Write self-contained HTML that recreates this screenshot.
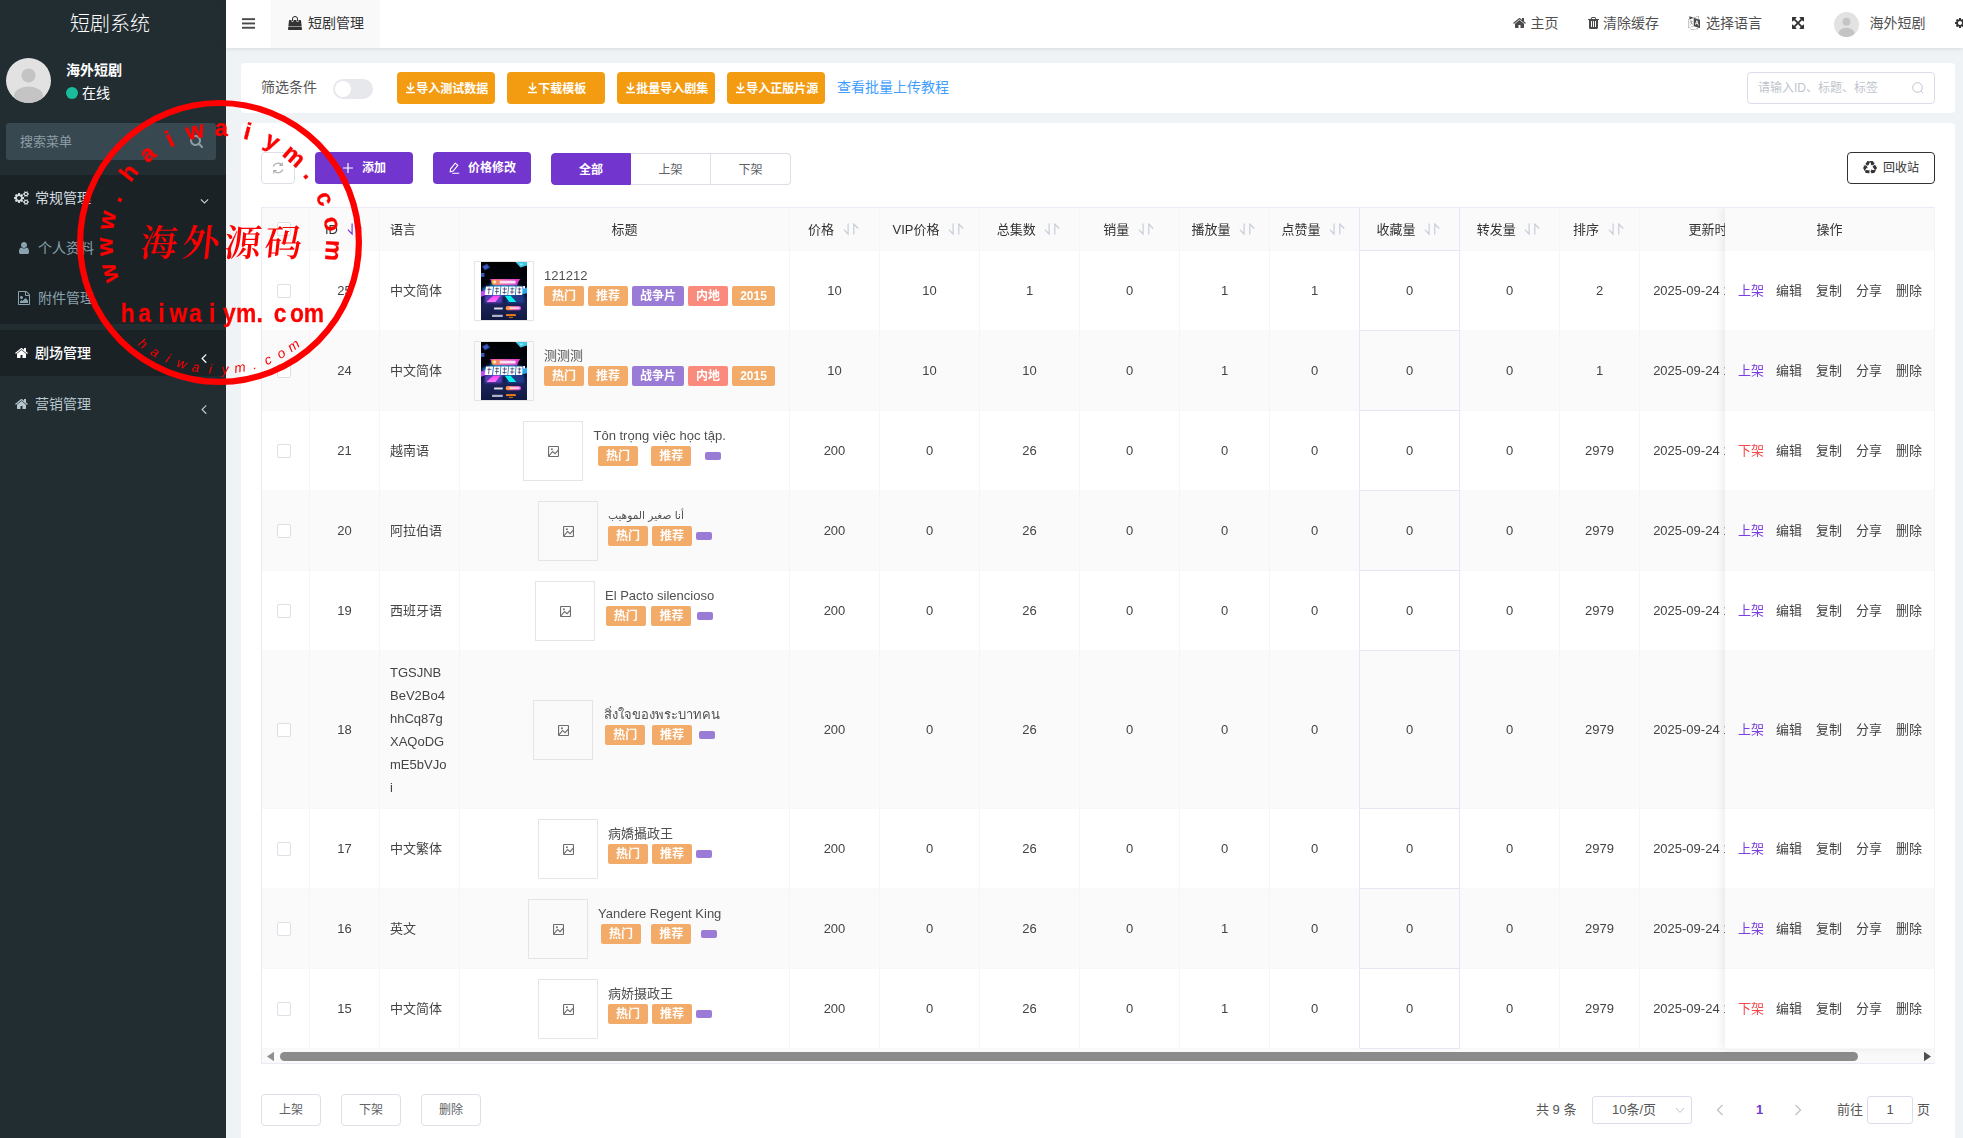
<!DOCTYPE html>
<html lang="zh-CN">
<head>
<meta charset="utf-8">
<title>短剧系统</title>
<style>
*{box-sizing:border-box;margin:0;padding:0}
html,body{width:1963px;height:1138px;overflow:hidden}
body{font-family:"Liberation Sans","Noto Sans CJK SC","DejaVu Sans",sans-serif;font-size:14px;color:#333;background:#eff3f6;position:relative}
svg{display:block}
.abs{position:absolute}
#side{position:absolute;left:0;top:0;width:226px;height:1138px;background:#222d32;color:#b8c7ce}
#logo{position:absolute;left:0;top:0;width:220px;height:46px;line-height:48px;text-align:center;color:#fff;font-size:20px;font-weight:300}
#avatar{position:absolute;left:6px;top:58px;width:45px;height:45px;border-radius:50%;background:#e2e2e2;overflow:hidden}
#uname{position:absolute;left:66px;top:60px;font-size:14px;font-weight:700;color:#fff;line-height:21px}
#ustat{position:absolute;left:66px;top:83px;font-size:14px;color:#fff;line-height:20px;padding-left:16px}
#ustat i{position:absolute;left:0;top:4px;width:12px;height:12px;border-radius:50%;background:#1abc9c}
#ssearch{position:absolute;left:6px;top:123px;width:210px;height:37px;border-radius:3px;background:#374850;color:#8e9da4;font-size:13px;line-height:37px;padding-left:14px}
.mblock{position:absolute;left:0;width:226px;background:#1a2226}
.mi{position:absolute;left:0;width:226px;height:20px;line-height:20px;font-size:14px;white-space:nowrap}
.mi .tx{position:absolute;top:0}
#hdr{position:absolute;left:226px;top:0;width:1737px;height:48px;background:#fff;box-shadow:0 1px 4px rgba(0,21,41,.10)}
#tab{position:absolute;left:45px;top:0;width:109px;height:48px;background:#f9f9f9;line-height:46px;font-size:14px;color:#333}
.nav{position:absolute;top:0;height:46px;line-height:46.5px;font-size:14px;color:#505050;white-space:nowrap}
#c1{position:absolute;left:241px;top:63px;width:1714px;height:50px;background:#fff;border-radius:4px}
#c2{position:absolute;left:241px;top:123px;width:1714px;height:1030px;background:#fff;border-radius:4px}
.obtn{position:absolute;top:9px;width:98px;height:32px;border-radius:4px;background:#f39c12;color:#fff;font-size:12px;font-weight:700;line-height:34px;white-space:nowrap}
.obtn span{position:absolute;top:0}
.pbtn{position:absolute;top:29px;width:98px;height:32px;border-radius:4px;background:#7236cf;color:#fff;font-size:12px;font-weight:700;line-height:33.5px;white-space:nowrap}
.pbtn span{position:absolute;top:0}
.seg{position:absolute;top:30px;width:80px;height:32px;border:1px solid #dcdfe6;border-left:0;color:#606266;font-size:12px;line-height:33px;text-align:center;background:#fff}
.bbtn{position:absolute;top:971px;width:60px;height:32px;border:1px solid #dcdfe6;border-radius:4px;color:#606266;font-size:12px;line-height:30px;text-align:center;background:#fff}
/* table */
#tw{position:absolute;left:261px;top:207px;width:1674px;height:857px;border:1px solid #ebebf5;border-right-color:#f3f3f8;overflow:hidden;background:transparent;will-change:transform;font-size:13px;color:#444}
.row{position:absolute;left:0;width:1672px}
.row.s{background:#fafafa}
.c{position:absolute;top:0;height:100%;border-right:1px solid #f5f5f9;border-bottom:1px solid #f8f8fb;white-space:nowrap}
.c .t{position:absolute;left:0;right:0;top:50%;margin-top:-11.5px;line-height:23px;text-align:center}
.c .tl{position:absolute;left:10px;top:50%;margin-top:-11.5px;line-height:23px}
.hd{position:absolute;left:0;top:0;width:1672px;height:43px;background:#fafafa;color:#333}
.cb{position:absolute;left:15px;top:50%;margin-top:-7px;width:14px;height:14px;border:1px solid #dcdfe6;border-radius:2px;background:#fff}
.imgb{position:absolute;top:50%;margin-top:-30px;width:60px;height:60px;border:1px solid #e5e5e8;background:transparent}
.tt{position:absolute;top:50%;margin-top:-27px;line-height:23px;font-size:13px;color:#505050;white-space:nowrap}
.tag{position:absolute;top:50%;margin-top:-5px;height:20px;line-height:20px;border-radius:2px;color:#fff;font-size:12px;font-weight:700;text-align:center}
.to{background:#f3ab69}.tp{background:#9a7bd6}.tr{background:#fa8b7c}
.pt{position:absolute;top:50%;margin-top:1px;width:16px;height:8px;border-radius:2px;background:#9a7bd6}
#fx{position:absolute;left:1463px;top:0;width:209px;height:841px;background:#fff;box-shadow:-3px 0 8px rgba(0,0,0,.07)}
.frow{position:absolute;left:0;width:209px;border-bottom:1px solid #f8f8fb}
.frow.s{background:#fafafa}
.frow a{position:absolute;top:50%;margin-top:-11.5px;line-height:23px;font-size:13px;color:#444}

.c.k{border-color:#e6e6f4}
.c.kp{border-right-color:#e6e6f4}

</style>
</head>
<body>
<div id="side">
<div id="logo">短剧系统</div>
<div id="avatar"><svg width="45" height="45" viewBox="0 0 45 45"><circle cx="22.5" cy="17.5" r="7" fill="#c4c4c4"/><ellipse cx="22.5" cy="38" rx="14.5" ry="9.5" fill="#c4c4c4"/></svg></div>
<div id="uname">海外短剧</div>
<div id="ustat"><i></i>在线</div>
<div id="ssearch">搜索菜单</div>
<svg style="position:absolute;left:190px;top:134px" width="13.00" height="14.00" viewBox="0 -1536 1664 1792"><path fill="#8e9da4" transform="scale(1,-1)" d="M1152 704C1152 457 951 256 704 256C457 256 256 457 256 704C256 951 457 1152 704 1152C951 1152 1152 951 1152 704ZM1664 -128C1664 -94 1650 -61 1627 -38L1284 305C1365 422 1408 562 1408 704C1408 1093 1093 1408 704 1408C315 1408 0 1093 0 704C0 315 315 0 704 0C846 0 986 43 1103 124L1446 -218C1469 -242 1502 -256 1536 -256C1606 -256 1664 -198 1664 -128Z"/></svg><div class="mblock" style="top:175px;height:149px"></div>
<div class="mblock" style="top:330px;height:46px"></div>
<div class="mi" style="top:188px;color:#d6dde0"><span class="tx" style="left:35px">常规管理</span></div>
<svg style="position:absolute;left:13.5px;top:191px" width="15.00" height="14.00" viewBox="0 -1536 1920 1792"><path fill="#d6dde0" transform="scale(1,-1)" d="M896 640C896 499 781 384 640 384C499 384 384 499 384 640C384 781 499 896 640 896C781 896 896 781 896 640ZM1664 128C1664 58 1607 0 1536 0C1466 0 1408 57 1408 128C1408 198 1466 256 1536 256C1606 256 1664 198 1664 128ZM1664 1152C1664 1082 1607 1024 1536 1024C1466 1024 1408 1081 1408 1152C1408 1222 1466 1280 1536 1280C1606 1280 1664 1222 1664 1152ZM1280 731C1280 745 1270 758 1256 761L1104 784C1095 812 1083 839 1070 866C1098 905 1128 941 1157 980C1161 986 1164 992 1164 999C1164 1027 1046 1135 1020 1159C1014 1164 1007 1167 999 1167C992 1167 985 1165 979 1160L861 1071C837 1083 812 1094 786 1102L763 1255C761 1269 747 1280 733 1280H547C533 1280 521 1270 517 1256C504 1207 499 1152 494 1102C467 1093 442 1083 417 1070L302 1160C296 1164 289 1167 281 1167C252 1167 140 1046 120 1019C115 1013 113 1006 113 999C113 992 116 985 120 979C152 941 182 904 210 864C197 839 186 814 178 788L23 764C10 762 0 747 0 734V549C0 535 10 522 24 520L176 496C185 468 197 441 211 414C182 375 152 338 123 300C119 294 116 288 116 281C116 252 234 145 260 121C266 116 273 113 281 113C288 113 296 115 301 120L419 209C443 197 468 186 494 178L517 25C519 11 533 0 547 0H733C747 0 759 10 763 24C776 73 781 128 786 179C813 187 838 197 863 210L978 120C984 116 991 113 999 113C1028 113 1140 235 1160 262C1165 267 1167 274 1167 281C1167 289 1164 295 1160 301C1128 339 1098 376 1070 416C1083 441 1094 466 1102 492L1257 516C1270 518 1280 533 1280 546ZM1920 198C1920 213 1791 227 1771 229C1763 247 1753 265 1741 281C1750 301 1792 401 1792 419C1792 421 1791 424 1788 426C1776 433 1669 496 1664 496L1658 494C1624 460 1594 421 1566 382C1556 383 1546 384 1536 384C1526 384 1516 383 1506 382C1496 397 1421 496 1408 496C1403 496 1296 432 1284 426C1281 424 1280 421 1280 419C1280 402 1322 301 1331 281C1319 265 1309 247 1301 229C1281 227 1152 213 1152 198V58C1152 43 1281 29 1301 27C1309 8 1319 -9 1331 -25C1322 -45 1280 -146 1280 -163C1280 -165 1281 -168 1284 -170C1296 -177 1403 -241 1408 -241C1421 -241 1496 -141 1506 -126C1516 -127 1526 -128 1536 -128C1546 -128 1556 -127 1566 -126C1576 -141 1651 -241 1664 -241C1669 -241 1776 -177 1788 -170C1791 -168 1792 -166 1792 -163C1792 -145 1750 -45 1741 -25C1753 -9 1763 8 1771 27C1791 29 1920 43 1920 58ZM1920 1222C1920 1237 1791 1251 1771 1253C1763 1271 1753 1289 1741 1305C1750 1325 1792 1425 1792 1443C1792 1445 1791 1448 1788 1450C1776 1457 1669 1520 1664 1520L1658 1518C1624 1484 1594 1445 1566 1406C1556 1407 1546 1408 1536 1408C1526 1408 1516 1407 1506 1406C1496 1421 1421 1520 1408 1520C1403 1520 1296 1456 1284 1450C1281 1448 1280 1445 1280 1443C1280 1426 1322 1325 1331 1305C1319 1289 1309 1271 1301 1253C1281 1251 1152 1237 1152 1222V1082C1152 1067 1281 1053 1301 1051C1309 1032 1319 1015 1331 999C1322 979 1280 878 1280 861C1280 859 1281 856 1284 854C1296 847 1403 783 1408 783C1421 783 1496 883 1506 898C1516 897 1526 896 1536 896C1546 896 1556 897 1566 898C1576 883 1651 783 1664 783C1669 783 1776 847 1788 854C1791 856 1792 858 1792 861C1792 879 1750 979 1741 999C1753 1015 1763 1032 1771 1051C1791 1053 1920 1067 1920 1082Z"/></svg><div class="mi" style="top:237.6px;color:#8aa4af"><span class="tx" style="left:38px">个人资料</span></div>
<svg style="position:absolute;left:19px;top:240.5px" width="10.00" height="14.00" viewBox="0 -1536 1280 1792"><path fill="#8aa4af" transform="scale(1,-1)" d="M1280 137C1280 400 1215 704 953 704C872 625 762 576 640 576C518 576 408 625 327 704C65 704 0 400 0 137C0 -9 96 -128 213 -128H1067C1184 -128 1280 -9 1280 137ZM1024 1024C1024 1236 852 1408 640 1408C428 1408 256 1236 256 1024C256 812 428 640 640 640C852 640 1024 812 1024 1024Z"/></svg><div class="mi" style="top:287.6px;color:#8aa4af"><span class="tx" style="left:38px">附件管理</span></div>
<svg style="position:absolute;left:18px;top:290.5px" width="12.00" height="14.00" viewBox="0 -1536 1536 1792"><path fill="#8aa4af" transform="scale(1,-1)" d="M1468 1156 1156 1468C1119 1505 1045 1536 992 1536H96C43 1536 0 1493 0 1440V-160C0 -213 43 -256 96 -256H1440C1493 -256 1536 -213 1536 -160V992C1536 1045 1505 1119 1468 1156ZM1024 1400C1041 1394 1058 1385 1065 1378L1378 1065C1385 1058 1394 1041 1400 1024H1024ZM1408 -128H128V1408H896V992C896 939 939 896 992 896H1408ZM1280 320 960 640 576 256 448 384 256 192V0H1280ZM448 512C554 512 640 598 640 704C640 810 554 896 448 896C342 896 256 810 256 704C256 598 342 512 448 512Z"/></svg><div class="mi" style="top:342.6px;color:#fff;font-weight:500"><span class="tx" style="left:35px">剧场管理</span></div>
<svg style="position:absolute;left:14.5px;top:345.5px" width="13.00" height="14.00" viewBox="0 -1536 1664 1792"><path fill="#fff" transform="scale(1,-1)" d="M1408 544C1408 546 1408 548 1407 550L832 1024L257 550C257 548 256 546 256 544V64C256 29 285 0 320 0H704V384H960V0H1344C1379 0 1408 29 1408 64ZM1631 613C1642 626 1640 647 1627 658L1408 840V1248C1408 1266 1394 1280 1376 1280H1184C1166 1280 1152 1266 1152 1248V1053L908 1257C866 1292 798 1292 756 1257L37 658C24 647 22 626 33 613L95 539C100 533 108 529 116 528C125 527 133 530 140 535L832 1112L1524 535C1530 530 1537 528 1545 528C1546 528 1547 528 1548 528C1556 529 1564 533 1569 539L1631 613Z"/></svg><div class="mi" style="top:393.6px;color:#b8c7ce"><span class="tx" style="left:35px">营销管理</span></div>
<svg style="position:absolute;left:14.5px;top:396.5px" width="13.00" height="14.00" viewBox="0 -1536 1664 1792"><path fill="#b8c7ce" transform="scale(1,-1)" d="M1408 544C1408 546 1408 548 1407 550L832 1024L257 550C257 548 256 546 256 544V64C256 29 285 0 320 0H704V384H960V0H1344C1379 0 1408 29 1408 64ZM1631 613C1642 626 1640 647 1627 658L1408 840V1248C1408 1266 1394 1280 1376 1280H1184C1166 1280 1152 1266 1152 1248V1053L908 1257C866 1292 798 1292 756 1257L37 658C24 647 22 626 33 613L95 539C100 533 108 529 116 528C125 527 133 530 140 535L832 1112L1524 535C1530 530 1537 528 1545 528C1546 528 1547 528 1548 528C1556 529 1564 533 1569 539L1631 613Z"/></svg><svg style="position:absolute;left:200px;top:194.3px" width="9.00" height="14.00" viewBox="0 -1536 1152 1792"><path fill="#d6dde0" transform="scale(1,-1)" d="M1075 800C1075 808 1071 817 1065 823L1015 873C1009 879 1000 883 992 883C984 883 975 879 969 873L576 480L183 873C177 879 168 883 160 883C151 883 143 879 137 873L87 823C81 817 77 808 77 800C77 792 81 783 87 777L553 311C559 305 568 301 576 301C584 301 593 305 599 311L1065 777C1071 783 1075 792 1075 800Z"/></svg><svg style="position:absolute;left:201px;top:350px" width="5.71" height="16.00" viewBox="0 -1536 640 1792"><path fill="#fff" transform="scale(1,-1)" d="M627 992C627 1001 623 1009 617 1015L567 1065C561 1071 552 1075 544 1075C536 1075 527 1071 521 1065L55 599C49 593 45 584 45 576C45 568 49 559 55 553L521 87C527 81 536 77 544 77C552 77 561 81 567 87L617 137C623 143 627 152 627 160C627 168 623 177 617 183L224 576L617 969C623 975 627 984 627 992Z"/></svg><svg style="position:absolute;left:201px;top:400.5px" width="5.71" height="16.00" viewBox="0 -1536 640 1792"><path fill="#b8c7ce" transform="scale(1,-1)" d="M627 992C627 1001 623 1009 617 1015L567 1065C561 1071 552 1075 544 1075C536 1075 527 1071 521 1065L55 599C49 593 45 584 45 576C45 568 49 559 55 553L521 87C527 81 536 77 544 77C552 77 561 81 567 87L617 137C623 143 627 152 627 160C627 168 623 177 617 183L224 576L617 969C623 975 627 984 627 992Z"/></svg></div>
<div id="hdr">
<svg class="abs" style="left:16px;top:17.5px" width="13" height="11" viewBox="0 0 13 11"><rect x="0" y="0.2" width="13" height="1.9" fill="#4a4a4a"/><rect x="0" y="4.5" width="13" height="1.9" fill="#4a4a4a"/><rect x="0" y="8.8" width="13" height="1.9" fill="#4a4a4a"/></svg>
<div id="tab"><svg style="position:absolute;left:16.5px;top:16px" width="14.00" height="14.00" viewBox="0 -1536 1792 1792"><path fill="#333" transform="scale(1,-1)" d="M1757 128H35L0 -185C-2 -203 4 -221 16 -235C28 -248 46 -256 64 -256H1728C1746 -256 1764 -248 1776 -235C1788 -221 1794 -203 1792 -185ZM1664 967C1660 999 1633 1024 1600 1024H1344V896C1344 825 1287 768 1216 768C1145 768 1088 825 1088 896V1024H704V896C704 825 647 768 576 768C505 768 448 825 448 896V1024H192C159 1024 132 999 128 967L42 192H1750ZM1280 1152C1280 1364 1108 1536 896 1536C684 1536 512 1364 512 1152V896C512 861 541 832 576 832C611 832 640 861 640 896V1152C640 1293 755 1408 896 1408C1037 1408 1152 1293 1152 1152V896C1152 861 1181 832 1216 832C1251 832 1280 861 1280 896Z"/></svg><span style="position:absolute;left:37px;top:0">短剧管理</span></div>
<svg style="position:absolute;left:1287px;top:16px" width="13.00" height="14.00" viewBox="0 -1536 1664 1792"><path fill="#4a4a4a" transform="scale(1,-1)" d="M1408 544C1408 546 1408 548 1407 550L832 1024L257 550C257 548 256 546 256 544V64C256 29 285 0 320 0H704V384H960V0H1344C1379 0 1408 29 1408 64ZM1631 613C1642 626 1640 647 1627 658L1408 840V1248C1408 1266 1394 1280 1376 1280H1184C1166 1280 1152 1266 1152 1248V1053L908 1257C866 1292 798 1292 756 1257L37 658C24 647 22 626 33 613L95 539C100 533 108 529 116 528C125 527 133 530 140 535L832 1112L1524 535C1530 530 1537 528 1545 528C1546 528 1547 528 1548 528C1556 529 1564 533 1569 539L1631 613Z"/></svg><div class="nav" style="left:1304.5px">主页</div>
<svg style="position:absolute;left:1361.5px;top:16px" width="11.00" height="14.00" viewBox="0 -1536 1408 1792"><path fill="#4a4a4a" transform="scale(1,-1)" d="M512 160C512 142 498 128 480 128H416C398 128 384 142 384 160V864C384 882 398 896 416 896H480C498 896 512 882 512 864V160ZM768 160C768 142 754 128 736 128H672C654 128 640 142 640 160V864C640 882 654 896 672 896H736C754 896 768 882 768 864V160ZM1024 160C1024 142 1010 128 992 128H928C910 128 896 142 896 160V864C896 882 910 896 928 896H992C1010 896 1024 882 1024 864V160ZM480 1152 529 1269C532 1273 540 1279 546 1280H863C868 1279 877 1273 880 1269L928 1152ZM1408 1120C1408 1138 1394 1152 1376 1152H1067L997 1319C977 1368 917 1408 864 1408H544C491 1408 431 1368 411 1319L341 1152H32C14 1152 0 1138 0 1120V1056C0 1038 14 1024 32 1024H128V72C128 -38 200 -128 288 -128H1120C1208 -128 1280 -34 1280 76V1024H1376C1394 1024 1408 1038 1408 1056Z"/></svg><div class="nav" style="left:1377px">清除缓存</div>
<svg style="position:absolute;left:1462px;top:16px" width="12.00" height="14.00" viewBox="0 -1536 1536 1792"><path fill="#4a4a4a" transform="scale(1,-1)" d="M654 458C656 466 645 512 639 514C633 516 514 566 497 574C483 581 449 595 433 602C478 672 506 725 510 733C517 748 565 842 566 847C567 853 568 875 567 880C566 885 549 875 525 867C501 859 456 829 438 826C421 822 365 801 336 791C307 781 253 765 231 759C209 753 189 752 177 748C178 731 182 725 182 725C185 720 197 707 210 704C224 700 247 701 257 704C268 706 286 715 288 719C290 723 287 735 291 739C295 742 350 755 370 761C391 768 470 795 480 794C477 782 414 656 393 618C373 580 254 414 229 385C209 362 163 305 147 293C151 291 180 294 185 297C218 318 272 386 290 407C342 468 388 533 424 588C431 585 488 538 503 528C518 518 577 485 590 479C603 474 652 451 654 458ZM449 944C446 957 438 961 428 961C418 960 388 952 373 947C359 943 328 934 315 931C302 928 273 932 269 936C265 940 274 905 286 892C308 870 326 867 335 866C355 866 380 872 395 878C410 884 435 897 445 916C447 920 452 927 449 944ZM1147 815 1071 630 1210 588ZM39 15V1046L733 1279V247ZM1280 332 1243 467 1032 532 987 422 885 453 1101 989 1201 958 1382 301ZM777 1294 1350 1490V1110ZM1088 -29 1131 -102C1100 -119 1071 -138 1038 -153C924 -202 839 -218 714 -218C613 -218 487 -177 397 -132C384 -126 337 -97 328 -97C318 -97 310 -105 310 -116C310 -123 312 -127 318 -132C402 -193 595 -256 701 -256H785C814 -256 847 -250 876 -244C971 -228 1071 -188 1152 -136L1192 -202L1246 -42ZM1536 1050 1389 1097V1515C1389 1528 1380 1536 1369 1536C1360 1536 738 1321 731 1319L173 1517V1133C88 1104 27 1084 24 1083C18 1081 10 1079 4 1072C2 1070 1 1065 0 1062V-16C0 -17 1 -18 1 -19C4 -27 11 -32 19 -32C29 -32 746 210 762 217C762 217 763 217 1536 -29Z"/></svg><div class="nav" style="left:1480px">选择语言</div>
<svg style="position:absolute;left:1565.5px;top:16px" width="12.00" height="14.00" viewBox="0 -1536 1536 1792"><path fill="#333" transform="scale(1,-1)" d="M1283 995 1427 851C1439 839 1455 832 1472 832C1480 832 1489 834 1497 837C1520 847 1536 870 1536 896V1344C1536 1379 1507 1408 1472 1408H1024C998 1408 975 1392 965 1368C955 1345 960 1317 979 1299L1123 1155L768 800L413 1155L557 1299C576 1317 581 1345 571 1368C561 1392 538 1408 512 1408H64C29 1408 0 1379 0 1344V896C0 870 16 847 40 837C47 834 56 832 64 832C81 832 97 839 109 851L253 995L608 640L253 285L109 429C91 448 63 453 40 443C16 433 0 410 0 384V-64C0 -99 29 -128 64 -128H512C538 -128 561 -112 571 -88C581 -65 576 -37 557 -19L413 125L768 480L1123 125L979 -19C960 -37 955 -65 965 -88C975 -112 998 -128 1024 -128H1472C1507 -128 1536 -99 1536 -64V384C1536 410 1520 433 1497 443C1473 453 1445 448 1427 429L1283 285L928 640Z"/></svg><div class="abs" style="left:1608px;top:12px;width:25px;height:25px;border-radius:50%;background:#e2e2e2;overflow:hidden"><svg width="25" height="25" viewBox="0 0 45 45"><circle cx="22.5" cy="17.5" r="7" fill="#c4c4c4"/><ellipse cx="22.5" cy="38" rx="14.5" ry="9.5" fill="#c4c4c4"/></svg></div>
<div class="nav" style="left:1643.5px">海外短剧</div>
<svg style="position:absolute;left:1729px;top:16px" width="15.00" height="14.00" viewBox="0 -1536 1920 1792"><path fill="#333" transform="scale(1,-1)" d="M896 640C896 499 781 384 640 384C499 384 384 499 384 640C384 781 499 896 640 896C781 896 896 781 896 640ZM1664 128C1664 58 1607 0 1536 0C1466 0 1408 57 1408 128C1408 198 1466 256 1536 256C1606 256 1664 198 1664 128ZM1664 1152C1664 1082 1607 1024 1536 1024C1466 1024 1408 1081 1408 1152C1408 1222 1466 1280 1536 1280C1606 1280 1664 1222 1664 1152ZM1280 731C1280 745 1270 758 1256 761L1104 784C1095 812 1083 839 1070 866C1098 905 1128 941 1157 980C1161 986 1164 992 1164 999C1164 1027 1046 1135 1020 1159C1014 1164 1007 1167 999 1167C992 1167 985 1165 979 1160L861 1071C837 1083 812 1094 786 1102L763 1255C761 1269 747 1280 733 1280H547C533 1280 521 1270 517 1256C504 1207 499 1152 494 1102C467 1093 442 1083 417 1070L302 1160C296 1164 289 1167 281 1167C252 1167 140 1046 120 1019C115 1013 113 1006 113 999C113 992 116 985 120 979C152 941 182 904 210 864C197 839 186 814 178 788L23 764C10 762 0 747 0 734V549C0 535 10 522 24 520L176 496C185 468 197 441 211 414C182 375 152 338 123 300C119 294 116 288 116 281C116 252 234 145 260 121C266 116 273 113 281 113C288 113 296 115 301 120L419 209C443 197 468 186 494 178L517 25C519 11 533 0 547 0H733C747 0 759 10 763 24C776 73 781 128 786 179C813 187 838 197 863 210L978 120C984 116 991 113 999 113C1028 113 1140 235 1160 262C1165 267 1167 274 1167 281C1167 289 1164 295 1160 301C1128 339 1098 376 1070 416C1083 441 1094 466 1102 492L1257 516C1270 518 1280 533 1280 546ZM1920 198C1920 213 1791 227 1771 229C1763 247 1753 265 1741 281C1750 301 1792 401 1792 419C1792 421 1791 424 1788 426C1776 433 1669 496 1664 496L1658 494C1624 460 1594 421 1566 382C1556 383 1546 384 1536 384C1526 384 1516 383 1506 382C1496 397 1421 496 1408 496C1403 496 1296 432 1284 426C1281 424 1280 421 1280 419C1280 402 1322 301 1331 281C1319 265 1309 247 1301 229C1281 227 1152 213 1152 198V58C1152 43 1281 29 1301 27C1309 8 1319 -9 1331 -25C1322 -45 1280 -146 1280 -163C1280 -165 1281 -168 1284 -170C1296 -177 1403 -241 1408 -241C1421 -241 1496 -141 1506 -126C1516 -127 1526 -128 1536 -128C1546 -128 1556 -127 1566 -126C1576 -141 1651 -241 1664 -241C1669 -241 1776 -177 1788 -170C1791 -168 1792 -166 1792 -163C1792 -145 1750 -45 1741 -25C1753 -9 1763 8 1771 27C1791 29 1920 43 1920 58ZM1920 1222C1920 1237 1791 1251 1771 1253C1763 1271 1753 1289 1741 1305C1750 1325 1792 1425 1792 1443C1792 1445 1791 1448 1788 1450C1776 1457 1669 1520 1664 1520L1658 1518C1624 1484 1594 1445 1566 1406C1556 1407 1546 1408 1536 1408C1526 1408 1516 1407 1506 1406C1496 1421 1421 1520 1408 1520C1403 1520 1296 1456 1284 1450C1281 1448 1280 1445 1280 1443C1280 1426 1322 1325 1331 1305C1319 1289 1309 1271 1301 1253C1281 1251 1152 1237 1152 1222V1082C1152 1067 1281 1053 1301 1051C1309 1032 1319 1015 1331 999C1322 979 1280 878 1280 861C1280 859 1281 856 1284 854C1296 847 1403 783 1408 783C1421 783 1496 883 1506 898C1516 897 1526 896 1536 896C1546 896 1556 897 1566 898C1576 883 1651 783 1664 783C1669 783 1776 847 1788 854C1791 856 1792 858 1792 861C1792 879 1750 979 1741 999C1753 1015 1763 1032 1771 1051C1791 1053 1920 1067 1920 1082Z"/></svg></div>
<div id="c1">
<div class="abs" style="left:20px;top:14px;line-height:20px;color:#555">筛选条件</div>
<div class="abs" style="left:92px;top:16px;width:40px;height:20px;border-radius:10px;background:#e7e8ec"><div class="abs" style="left:2px;top:2px;width:16px;height:16px;border-radius:50%;background:#fff"></div></div>
<div class="obtn" style="left:156px"><svg class="abs" style="left:7.5px;top:10px" width="11" height="12" viewBox="0 0 11 12"><path d="M5.5 .6v7.2M2 4.6l3.5 3.4 3.5-3.4M1 10.4h9" fill="none" stroke="#fff" stroke-width="1.5"/></svg><span style="left:19.2px">导入测试数据</span></div>
<div class="obtn" style="left:266px"><svg class="abs" style="left:19.5px;top:10px" width="11" height="12" viewBox="0 0 11 12"><path d="M5.5 .6v7.2M2 4.6l3.5 3.4 3.5-3.4M1 10.4h9" fill="none" stroke="#fff" stroke-width="1.5"/></svg><span style="left:31.2px">下载模板</span></div>
<div class="obtn" style="left:376px"><svg class="abs" style="left:7.5px;top:10px" width="11" height="12" viewBox="0 0 11 12"><path d="M5.5 .6v7.2M2 4.6l3.5 3.4 3.5-3.4M1 10.4h9" fill="none" stroke="#fff" stroke-width="1.5"/></svg><span style="left:19.2px">批量导入剧集</span></div>
<div class="obtn" style="left:486px"><svg class="abs" style="left:7.5px;top:10px" width="11" height="12" viewBox="0 0 11 12"><path d="M5.5 .6v7.2M2 4.6l3.5 3.4 3.5-3.4M1 10.4h9" fill="none" stroke="#fff" stroke-width="1.5"/></svg><span style="left:19.2px">导入正版片源</span></div>
<div class="abs" style="left:596px;top:14px;line-height:20px;color:#409eff">查看批量上传教程</div>
<div class="abs" style="left:1506px;top:9px;width:188px;height:32px;border:1px solid #dcdcec;border-radius:4px;font-size:12px;line-height:30px;color:#c0c4cc;padding-left:10px">请输入ID、标题、标签</div>
<svg class="abs" style="left:1670px;top:18px" width="14" height="14" viewBox="0 0 14 14"><circle cx="6.5" cy="6.5" r="4.8" fill="none" stroke="#c0c4cc" stroke-width="1"/><path d="M10 10l2.2 2.2" stroke="#c0c4cc" stroke-width="1" fill="none"/></svg>
</div>
<div id="c2">
<div class="abs" style="left:20px;top:29px;width:34px;height:32px;border:1px solid #dcdfe6;border-radius:4px"></div>
<svg class="abs" style="left:30px;top:38px" width="14" height="14" viewBox="0 0 14 14"><path d="M2.2 5.6A5 5 0 0 1 11 4.2M11.8 8.4A5 5 0 0 1 3 9.8M11.2 1.6v2.8h-2.8M2.8 12.4V9.6h2.8" fill="none" stroke="#aaa" stroke-width="1.1"/></svg>
<div class="pbtn" style="left:74px"><svg class="abs" style="left:28px;top:11px" width="10" height="10" viewBox="0 0 10 10"><path d="M5 0v10M0 5h10" stroke="#fff" stroke-width="1.2"/></svg><span style="left:47px">添加</span></div>
<div class="pbtn" style="left:192px"><svg class="abs" style="left:15px;top:10px" width="12" height="12" viewBox="0 0 12 12"><path d="M7.2 1.2l2.6 2.2-4.6 5.6-3 .8.4-3zM4.2 11.2h7" fill="none" stroke="#fff" stroke-width="1.1"/></svg><span style="left:35px">价格修改</span></div>
<div class="seg" style="left:310px;width:80px;background:#7236cf;border-color:#7236cf;color:#fff;font-weight:700;border-radius:4px 0 0 4px;border-left:1px solid #7236cf">全部</div>
<div class="seg" style="left:390px">上架</div>
<div class="seg" style="left:470px;border-radius:0 4px 4px 0">下架</div>
<div class="abs" style="left:1606px;top:29px;width:88px;height:32px;border:1px solid #333;border-radius:4px;font-size:12px;line-height:30px;color:#333"><span class="abs" style="left:35px;top:0">回收站</span><svg style="position:absolute;left:14.5px;top:8px" width="14.00" height="14.00" viewBox="0 -1536 1792 1792"><path fill="#333" transform="scale(1,-1)" d="M836 367C404 383 327 395 327 395C297 306 245 196 285 103C304 59 347 10 399 6L819 -23L821 -1L836 367ZM449 953 16 970 156 884C77 759 42 696 42 696C42 696 7 633 46 575L236 218C236 218 257 409 482 666L629 574ZM1680 436C1680 436 1510 345 1171 386L1164 559L953 197L1183 -170L1175 -6C1323 -1 1394 6 1394 6C1394 6 1466 12 1492 77L1680 436ZM895 1360C831 1429 759 1526 659 1535C610 1540 547 1524 519 1480L294 1124L313 1112L630 925C848 1298 895 1360 895 1360ZM1550 1053 1531 1042 1218 847C1449 482 1483 411 1483 411C1573 436 1693 456 1747 540C1773 582 1789 645 1762 690ZM1407 1279C1334 1408 1295 1469 1295 1469C1295 1469 1257 1529 1187 1523L782 1524C782 1524 941 1414 1061 1095L910 1009L1329 989L1549 1362Z"/></svg></div>
<div class="bbtn" style="left:20px">上架</div>
<div class="bbtn" style="left:100px">下架</div>
<div class="bbtn" style="left:180px">删除</div>
<div class="abs" style="left:1295px;top:975px;line-height:23px;font-size:13px;color:#555">共 9 条</div>
<div class="abs" style="left:1351px;top:973px;width:100px;height:28px;border:1px solid #dcdcec;border-radius:3px;font-size:13px;line-height:26px;color:#555"><span class="abs" style="left:19px;top:0">10条/页</span><svg class="abs" style="left:82px;top:10px" width="10" height="7" viewBox="0 0 10 7"><path d="M1 1l4 4.4 4-4.4" fill="none" stroke="#c0c4cc" stroke-width="1"/></svg></div>
<svg class="abs" style="left:1475px;top:981px" width="8" height="12" viewBox="0 0 8 12"><path d="M6.5 1l-5 5 5 5" fill="none" stroke="#c0c4cc" stroke-width="1.4"/></svg>
<div class="abs" style="left:1515px;top:975px;line-height:23px;font-size:13px;font-weight:700;color:#7236cf">1</div>
<svg class="abs" style="left:1553px;top:981px" width="8" height="12" viewBox="0 0 8 12"><path d="M1.5 1l5 5-5 5" fill="none" stroke="#c0c4cc" stroke-width="1.4"/></svg>
<div class="abs" style="left:1596px;top:975px;line-height:23px;font-size:13px;color:#555">前往</div>
<div class="abs" style="left:1626px;top:973px;width:46px;height:28px;border:1px solid #dcdcec;border-radius:3px;font-size:13px;line-height:26px;color:#555;text-align:center">1</div>
<div class="abs" style="left:1676px;top:975px;line-height:23px;font-size:13px;color:#555">页</div>
</div>
<div id="tw">
<div class="hd">
<div class="c" style="left:0px;width:48px"><i class="cb"></i></div><div class="c" style="left:48px;width:70px"><span class="abs" style="left:15px;top:10px;line-height:23px">ID</span><svg class="abs" style="left:37.2px;top:15px" width="16" height="13" viewBox="0 0 16 13"><path d="M5.1 .4V11L.8 6.7" fill="none" stroke="#7236cf" stroke-width="1.15"/><path d="M10.8 11.6V1l4.4 4.5" fill="none" stroke="#c6cbd8" stroke-width="1.15"/></svg></div><div class="c" style="left:118px;width:80px"><span class="tl">语言</span></div><div class="c" style="left:198px;width:330px"><span class="t">标题</span></div><div class="c" style="left:528px;width:90px"><span class="abs" style="left:18px;top:10px;line-height:23px">价格</span><svg class="abs" style="left:52.5px;top:15px" width="16" height="13" viewBox="0 0 16 13"><path d="M5.1 .4V11L.8 6.7" fill="none" stroke="#c6cbd8" stroke-width="1.15"/><path d="M10.8 11.6V1l4.4 4.5" fill="none" stroke="#c6cbd8" stroke-width="1.15"/></svg></div><div class="c" style="left:618px;width:100px"><span class="abs" style="left:12.5px;top:10px;line-height:23px">VIP价格</span><svg class="abs" style="left:68.20000000000005px;top:15px" width="16" height="13" viewBox="0 0 16 13"><path d="M5.1 .4V11L.8 6.7" fill="none" stroke="#c6cbd8" stroke-width="1.15"/><path d="M10.8 11.6V1l4.4 4.5" fill="none" stroke="#c6cbd8" stroke-width="1.15"/></svg></div><div class="c" style="left:718px;width:100px"><span class="abs" style="left:16.700000000000045px;top:10px;line-height:23px">总集数</span><svg class="abs" style="left:64.20000000000005px;top:15px" width="16" height="13" viewBox="0 0 16 13"><path d="M5.1 .4V11L.8 6.7" fill="none" stroke="#c6cbd8" stroke-width="1.15"/><path d="M10.8 11.6V1l4.4 4.5" fill="none" stroke="#c6cbd8" stroke-width="1.15"/></svg></div><div class="c" style="left:818px;width:100px"><span class="abs" style="left:23.200000000000045px;top:10px;line-height:23px">销量</span><svg class="abs" style="left:57.700000000000045px;top:15px" width="16" height="13" viewBox="0 0 16 13"><path d="M5.1 .4V11L.8 6.7" fill="none" stroke="#c6cbd8" stroke-width="1.15"/><path d="M10.8 11.6V1l4.4 4.5" fill="none" stroke="#c6cbd8" stroke-width="1.15"/></svg></div><div class="c" style="left:918px;width:90px"><span class="abs" style="left:11.599999999999909px;top:10px;line-height:23px">播放量</span><svg class="abs" style="left:59.09999999999991px;top:15px" width="16" height="13" viewBox="0 0 16 13"><path d="M5.1 .4V11L.8 6.7" fill="none" stroke="#c6cbd8" stroke-width="1.15"/><path d="M10.8 11.6V1l4.4 4.5" fill="none" stroke="#c6cbd8" stroke-width="1.15"/></svg></div><div class="c kp" style="left:1008px;width:90px"><span class="abs" style="left:11.5px;top:10px;line-height:23px">点赞量</span><svg class="abs" style="left:59.299999999999955px;top:15px" width="16" height="13" viewBox="0 0 16 13"><path d="M5.1 .4V11L.8 6.7" fill="none" stroke="#c6cbd8" stroke-width="1.15"/><path d="M10.8 11.6V1l4.4 4.5" fill="none" stroke="#c6cbd8" stroke-width="1.15"/></svg></div><div class="c k" style="left:1098px;width:100px"><span class="abs" style="left:16.5px;top:10px;line-height:23px">收藏量</span><svg class="abs" style="left:64.29999999999995px;top:15px" width="16" height="13" viewBox="0 0 16 13"><path d="M5.1 .4V11L.8 6.7" fill="none" stroke="#c6cbd8" stroke-width="1.15"/><path d="M10.8 11.6V1l4.4 4.5" fill="none" stroke="#c6cbd8" stroke-width="1.15"/></svg></div><div class="c" style="left:1198px;width:100px"><span class="abs" style="left:16.700000000000045px;top:10px;line-height:23px">转发量</span><svg class="abs" style="left:64.20000000000005px;top:15px" width="16" height="13" viewBox="0 0 16 13"><path d="M5.1 .4V11L.8 6.7" fill="none" stroke="#c6cbd8" stroke-width="1.15"/><path d="M10.8 11.6V1l4.4 4.5" fill="none" stroke="#c6cbd8" stroke-width="1.15"/></svg></div><div class="c" style="left:1298px;width:80px"><span class="abs" style="left:13px;top:10px;line-height:23px">排序</span><svg class="abs" style="left:47.700000000000045px;top:15px" width="16" height="13" viewBox="0 0 16 13"><path d="M5.1 .4V11L.8 6.7" fill="none" stroke="#c6cbd8" stroke-width="1.15"/><path d="M10.8 11.6V1l4.4 4.5" fill="none" stroke="#c6cbd8" stroke-width="1.15"/></svg></div><div class="c" style="left:1378px;width:150px"><span class="t">更新时间</span></div></div>
<div class="row" style="top:43px;height:80px">
<div class="c" style="left:0;width:48px"><i class="cb"></i></div><div class="c" style="left:48px;width:70px"><span class="t">25</span></div><div class="c" style="left:118px;width:80px"><span class="tl">中文简体</span></div><div class="c" style="left:198px;width:330px"><div class="imgb" style="left:14px"><svg class="abs" style="left:6px;top:0" width="46" height="58" viewBox="0 0 46 58"><defs><linearGradient id="pg" x1="0" y1="0" x2="0" y2="1"><stop offset="0" stop-color="#000002"/><stop offset=".4" stop-color="#01030f"/><stop offset=".6" stop-color="#0c1a4a"/><stop offset=".74" stop-color="#1b2358"/><stop offset="1" stop-color="#0f1942"/></linearGradient><linearGradient id="pp" x1="0" y1="0" x2="1" y2="0"><stop offset="0" stop-color="#f9a52c"/><stop offset=".45" stop-color="#f2709a"/><stop offset="1" stop-color="#d94be0"/></linearGradient><linearGradient id="pm" x1="0" y1="0" x2="0" y2="1"><stop offset="0" stop-color="#ff3df0"/><stop offset="1" stop-color="#ff7df6"/></linearGradient><filter id="pb" x="-20%" y="-50%" width="140%" height="200%"><feGaussianBlur stdDeviation="1.3"/></filter></defs><rect width="46" height="58" fill="url(#pg)"/><path d="M34.5 0H46v3.4l-6.6 2z" fill="#3ac6e4"/><path d="M38 1.2l5 .6-3 2.2z" fill="#8fe6f5"/><path d="M.9 4.6l5.2-2.8 3 3.8-5.2 3z" fill="#2a449d"/><path d="M2.5 4.8l3.2-1.6 1.6 2.2-3 1.6z" fill="#3f5fc2"/><rect x="0" y="11" width="3.4" height="3.8" fill="#3d5cba"/><g filter="url(#pb)"><ellipse cx="23" cy="28" rx="22" ry="5.5" fill="#1b86e6" opacity=".8"/><ellipse cx="23" cy="22" rx="14" ry="4" fill="#15b8e8" opacity=".45"/><rect x="4" y="33" width="17" height="8" fill="#7a4be0" opacity=".75"/><rect x="26" y="33" width="17" height="8" fill="#2b4bb0" opacity=".6"/></g><path d="M0 29.4l6-1.6v4.6l-6 2.4z" fill="#c04df0"/><path d="M46 25.6l-5 1.6v5l5-1z" fill="#29a6f2"/><path d="M9 16.9h30l-3.2 6.4H12.2z" fill="#dd3ec6"/><rect x="10.5" y="17.5" width="25" height="5.2" rx="2.6" fill="url(#pp)"/><rect x="18.6" y="18.8" width="16" height="2.6" rx=".6" fill="#fbeeff" opacity=".9"/><circle cx="13.6" cy="20.1" r="1.5" fill="#fff2d8" opacity=".9"/><path d="M12.2 33.7h7l-4.7 6.4h-9z" fill="url(#pm)"/><path d="M23.8 33.7h5.8l5.8 6.4h-7z" fill="#00f4ec"/><g fill="#fff"><path d="M5 24.6h7l-.9 8.4h-7.4z"/><path d="M12.9 24.6h6.6l-.7 8.4h-6.8z"/><path d="M20.3 24.6h6.8l-.6 8.4h-6.9z"/><path d="M27.9 24.6h6.7l-.5 8.4h-6.9z"/><path d="M35.4 24.6h6.2l-.4 8.4h-6.3z"/><rect x="42.2" y="24" width="1.8" height="2.6"/></g><path d="M6.4 27.4h4M8.2 25.6l-.6 6.6M14.3 26.6l3.8.1M14 29.6h4M16 25.4l-.5 7M21.6 27h4.4M23.6 25.2l-.4 7M21.4 30.4h4.2M29.4 26.8h4M31.2 25.4l-.3 6.8M29 30h4.4M36.6 27h3.8M36.6 30.2h3.6M38.4 25.6l-.2 6.6" stroke="#141a44" stroke-width=".8" fill="none" opacity=".8"/><rect x="13" y="45.4" width="8.8" height="2.1" rx=".4" fill="#eceaf4" opacity=".92"/><rect x="24.7" y="44.1" width="15.3" height="4.1" rx="2" fill="url(#pp)"/><rect x="28.5" y="45.2" width="10" height="1.8" fill="#fff" opacity=".7"/><rect x="11" y="52.8" width="10.8" height="2.1" rx=".4" fill="#c9cce0" opacity=".85"/><rect x="25" y="52.1" width="9.8" height="2" fill="#e9781c"/><rect x="27.9" y="54.9" width="4" height=".9" fill="#e9781c"/></svg></div><span class="tt" style="left:84px">121212</span><span class="tag to" style="left:84px;width:40px">热门</span><span class="tag to" style="left:128px;width:40px">推荐</span><span class="tag tp" style="left:172px;width:52px">战争片</span><span class="tag tr" style="left:228px;width:40px">内地</span><span class="tag to" style="left:272px;width:43px">2015</span></div><div class="c" style="left:528px;width:90px"><span class="t">10</span></div><div class="c" style="left:618px;width:100px"><span class="t">10</span></div><div class="c" style="left:718px;width:100px"><span class="t">1</span></div><div class="c" style="left:818px;width:100px"><span class="t">0</span></div><div class="c" style="left:918px;width:90px"><span class="t">1</span></div><div class="c kp" style="left:1008px;width:90px"><span class="t">1</span></div><div class="c k" style="left:1098px;width:100px"><span class="t">0</span></div><div class="c" style="left:1198px;width:100px"><span class="t">0</span></div><div class="c" style="left:1298px;width:80px"><span class="t">2</span></div><div class="c" style="left:1378px;width:150px"><span class="t" style="left:-3px">2025-09-24 11:10:50</span></div></div>
<div class="row s" style="top:123px;height:80px">
<div class="c" style="left:0;width:48px"><i class="cb"></i></div><div class="c" style="left:48px;width:70px"><span class="t">24</span></div><div class="c" style="left:118px;width:80px"><span class="tl">中文简体</span></div><div class="c" style="left:198px;width:330px"><div class="imgb" style="left:14px"><svg class="abs" style="left:6px;top:0" width="46" height="58" viewBox="0 0 46 58"><rect width="46" height="58" fill="url(#pg)"/><path d="M34.5 0H46v3.4l-6.6 2z" fill="#3ac6e4"/><path d="M38 1.2l5 .6-3 2.2z" fill="#8fe6f5"/><path d="M.9 4.6l5.2-2.8 3 3.8-5.2 3z" fill="#2a449d"/><path d="M2.5 4.8l3.2-1.6 1.6 2.2-3 1.6z" fill="#3f5fc2"/><rect x="0" y="11" width="3.4" height="3.8" fill="#3d5cba"/><g filter="url(#pb)"><ellipse cx="23" cy="28" rx="22" ry="5.5" fill="#1b86e6" opacity=".8"/><ellipse cx="23" cy="22" rx="14" ry="4" fill="#15b8e8" opacity=".45"/><rect x="4" y="33" width="17" height="8" fill="#7a4be0" opacity=".75"/><rect x="26" y="33" width="17" height="8" fill="#2b4bb0" opacity=".6"/></g><path d="M0 29.4l6-1.6v4.6l-6 2.4z" fill="#c04df0"/><path d="M46 25.6l-5 1.6v5l5-1z" fill="#29a6f2"/><path d="M9 16.9h30l-3.2 6.4H12.2z" fill="#dd3ec6"/><rect x="10.5" y="17.5" width="25" height="5.2" rx="2.6" fill="url(#pp)"/><rect x="18.6" y="18.8" width="16" height="2.6" rx=".6" fill="#fbeeff" opacity=".9"/><circle cx="13.6" cy="20.1" r="1.5" fill="#fff2d8" opacity=".9"/><path d="M12.2 33.7h7l-4.7 6.4h-9z" fill="url(#pm)"/><path d="M23.8 33.7h5.8l5.8 6.4h-7z" fill="#00f4ec"/><g fill="#fff"><path d="M5 24.6h7l-.9 8.4h-7.4z"/><path d="M12.9 24.6h6.6l-.7 8.4h-6.8z"/><path d="M20.3 24.6h6.8l-.6 8.4h-6.9z"/><path d="M27.9 24.6h6.7l-.5 8.4h-6.9z"/><path d="M35.4 24.6h6.2l-.4 8.4h-6.3z"/><rect x="42.2" y="24" width="1.8" height="2.6"/></g><path d="M6.4 27.4h4M8.2 25.6l-.6 6.6M14.3 26.6l3.8.1M14 29.6h4M16 25.4l-.5 7M21.6 27h4.4M23.6 25.2l-.4 7M21.4 30.4h4.2M29.4 26.8h4M31.2 25.4l-.3 6.8M29 30h4.4M36.6 27h3.8M36.6 30.2h3.6M38.4 25.6l-.2 6.6" stroke="#141a44" stroke-width=".8" fill="none" opacity=".8"/><rect x="13" y="45.4" width="8.8" height="2.1" rx=".4" fill="#eceaf4" opacity=".92"/><rect x="24.7" y="44.1" width="15.3" height="4.1" rx="2" fill="url(#pp)"/><rect x="28.5" y="45.2" width="10" height="1.8" fill="#fff" opacity=".7"/><rect x="11" y="52.8" width="10.8" height="2.1" rx=".4" fill="#c9cce0" opacity=".85"/><rect x="25" y="52.1" width="9.8" height="2" fill="#e9781c"/><rect x="27.9" y="54.9" width="4" height=".9" fill="#e9781c"/></svg></div><span class="tt" style="left:84px">测测测</span><span class="tag to" style="left:84px;width:40px">热门</span><span class="tag to" style="left:128px;width:40px">推荐</span><span class="tag tp" style="left:172px;width:52px">战争片</span><span class="tag tr" style="left:228px;width:40px">内地</span><span class="tag to" style="left:272px;width:43px">2015</span></div><div class="c" style="left:528px;width:90px"><span class="t">10</span></div><div class="c" style="left:618px;width:100px"><span class="t">10</span></div><div class="c" style="left:718px;width:100px"><span class="t">10</span></div><div class="c" style="left:818px;width:100px"><span class="t">0</span></div><div class="c" style="left:918px;width:90px"><span class="t">1</span></div><div class="c kp" style="left:1008px;width:90px"><span class="t">0</span></div><div class="c k" style="left:1098px;width:100px"><span class="t">0</span></div><div class="c" style="left:1198px;width:100px"><span class="t">0</span></div><div class="c" style="left:1298px;width:80px"><span class="t">1</span></div><div class="c" style="left:1378px;width:150px"><span class="t" style="left:-3px">2025-09-24 11:10:50</span></div></div>
<div class="row" style="top:203px;height:80px">
<div class="c" style="left:0;width:48px"><i class="cb"></i></div><div class="c" style="left:48px;width:70px"><span class="t">21</span></div><div class="c" style="left:118px;width:80px"><span class="tl">越南语</span></div><div class="c" style="left:198px;width:330px"><div class="imgb" style="left:63px"><svg class="abs" style="left:23.9px;top:24.7px" width="11" height="11" viewBox="0 0 11 11"><rect x=".55" y=".55" width="9.9" height="9.9" rx=".4" fill="none" stroke="#6c6c6c" stroke-width="1.1"/><path d="M.9 9.9L4.6 5.5l2.5 2.2 3.2-3.6" fill="none" stroke="#6c6c6c" stroke-width="1.1"/><circle cx="3.9" cy="3.3" r=".95" fill="#6c6c6c"/></svg></div><span class="tt" style="left:133.5px">Tôn trọng việc học tập.</span><span class="tag to" style="left:138.1px;width:40px">热门</span><span class="tag to" style="left:191.3px;width:40px">推荐</span><i class="pt" style="left:244.5px"></i></div><div class="c" style="left:528px;width:90px"><span class="t">200</span></div><div class="c" style="left:618px;width:100px"><span class="t">0</span></div><div class="c" style="left:718px;width:100px"><span class="t">26</span></div><div class="c" style="left:818px;width:100px"><span class="t">0</span></div><div class="c" style="left:918px;width:90px"><span class="t">0</span></div><div class="c kp" style="left:1008px;width:90px"><span class="t">0</span></div><div class="c k" style="left:1098px;width:100px"><span class="t">0</span></div><div class="c" style="left:1198px;width:100px"><span class="t">0</span></div><div class="c" style="left:1298px;width:80px"><span class="t">2979</span></div><div class="c" style="left:1378px;width:150px"><span class="t" style="left:-3px">2025-09-24 11:10:50</span></div></div>
<div class="row s" style="top:283px;height:80px">
<div class="c" style="left:0;width:48px"><i class="cb"></i></div><div class="c" style="left:48px;width:70px"><span class="t">20</span></div><div class="c" style="left:118px;width:80px"><span class="tl">阿拉伯语</span></div><div class="c" style="left:198px;width:330px"><div class="imgb" style="left:78px"><svg class="abs" style="left:23.9px;top:24.7px" width="11" height="11" viewBox="0 0 11 11"><rect x=".55" y=".55" width="9.9" height="9.9" rx=".4" fill="none" stroke="#6c6c6c" stroke-width="1.1"/><path d="M.9 9.9L4.6 5.5l2.5 2.2 3.2-3.6" fill="none" stroke="#6c6c6c" stroke-width="1.1"/><circle cx="3.9" cy="3.3" r=".95" fill="#6c6c6c"/></svg></div><span class="tt" style="left:148px;font-family:'DejaVu Sans',sans-serif;font-size:10.6px">أنا صغير الموهيب</span><span class="tag to" style="left:148.0px;width:40px">热门</span><span class="tag to" style="left:192.0px;width:40px">推荐</span><i class="pt" style="left:236.0px"></i></div><div class="c" style="left:528px;width:90px"><span class="t">200</span></div><div class="c" style="left:618px;width:100px"><span class="t">0</span></div><div class="c" style="left:718px;width:100px"><span class="t">26</span></div><div class="c" style="left:818px;width:100px"><span class="t">0</span></div><div class="c" style="left:918px;width:90px"><span class="t">0</span></div><div class="c kp" style="left:1008px;width:90px"><span class="t">0</span></div><div class="c k" style="left:1098px;width:100px"><span class="t">0</span></div><div class="c" style="left:1198px;width:100px"><span class="t">0</span></div><div class="c" style="left:1298px;width:80px"><span class="t">2979</span></div><div class="c" style="left:1378px;width:150px"><span class="t" style="left:-3px">2025-09-24 11:10:50</span></div></div>
<div class="row" style="top:363px;height:80px">
<div class="c" style="left:0;width:48px"><i class="cb"></i></div><div class="c" style="left:48px;width:70px"><span class="t">19</span></div><div class="c" style="left:118px;width:80px"><span class="tl">西班牙语</span></div><div class="c" style="left:198px;width:330px"><div class="imgb" style="left:75px"><svg class="abs" style="left:23.9px;top:24.7px" width="11" height="11" viewBox="0 0 11 11"><rect x=".55" y=".55" width="9.9" height="9.9" rx=".4" fill="none" stroke="#6c6c6c" stroke-width="1.1"/><path d="M.9 9.9L4.6 5.5l2.5 2.2 3.2-3.6" fill="none" stroke="#6c6c6c" stroke-width="1.1"/><circle cx="3.9" cy="3.3" r=".95" fill="#6c6c6c"/></svg></div><span class="tt" style="left:145px">El Pacto silencioso</span><span class="tag to" style="left:145.8px;width:40px">热门</span><span class="tag to" style="left:191.4px;width:40px">推荐</span><i class="pt" style="left:237.0px"></i></div><div class="c" style="left:528px;width:90px"><span class="t">200</span></div><div class="c" style="left:618px;width:100px"><span class="t">0</span></div><div class="c" style="left:718px;width:100px"><span class="t">26</span></div><div class="c" style="left:818px;width:100px"><span class="t">0</span></div><div class="c" style="left:918px;width:90px"><span class="t">0</span></div><div class="c kp" style="left:1008px;width:90px"><span class="t">0</span></div><div class="c k" style="left:1098px;width:100px"><span class="t">0</span></div><div class="c" style="left:1198px;width:100px"><span class="t">0</span></div><div class="c" style="left:1298px;width:80px"><span class="t">2979</span></div><div class="c" style="left:1378px;width:150px"><span class="t" style="left:-3px">2025-09-24 11:10:50</span></div></div>
<div class="row s" style="top:443px;height:158px">
<div class="c" style="left:0;width:48px"><i class="cb"></i></div><div class="c" style="left:48px;width:70px"><span class="t">18</span></div><div class="c" style="left:118px;width:80px"><span class="abs" style="left:10px;top:10px;width:58.5px;line-height:23px;white-space:normal;word-break:break-all">TGSJNBBeV2Bo4hhCq87gXAQoDGmE5bVJoi</span></div><div class="c" style="left:198px;width:330px"><div class="imgb" style="left:73px"><svg class="abs" style="left:23.9px;top:24.7px" width="11" height="11" viewBox="0 0 11 11"><rect x=".55" y=".55" width="9.9" height="9.9" rx=".4" fill="none" stroke="#6c6c6c" stroke-width="1.1"/><path d="M.9 9.9L4.6 5.5l2.5 2.2 3.2-3.6" fill="none" stroke="#6c6c6c" stroke-width="1.1"/><circle cx="3.9" cy="3.3" r=".95" fill="#6c6c6c"/></svg></div><span class="tt" style="left:144px">สิ่งใจของพระบาทคน</span><span class="tag to" style="left:145.3px;width:40px">热门</span><span class="tag to" style="left:192.0px;width:40px">推荐</span><i class="pt" style="left:238.7px"></i></div><div class="c" style="left:528px;width:90px"><span class="t">200</span></div><div class="c" style="left:618px;width:100px"><span class="t">0</span></div><div class="c" style="left:718px;width:100px"><span class="t">26</span></div><div class="c" style="left:818px;width:100px"><span class="t">0</span></div><div class="c" style="left:918px;width:90px"><span class="t">0</span></div><div class="c kp" style="left:1008px;width:90px"><span class="t">0</span></div><div class="c k" style="left:1098px;width:100px"><span class="t">0</span></div><div class="c" style="left:1198px;width:100px"><span class="t">0</span></div><div class="c" style="left:1298px;width:80px"><span class="t">2979</span></div><div class="c" style="left:1378px;width:150px"><span class="t" style="left:-3px">2025-09-24 11:10:50</span></div></div>
<div class="row" style="top:601px;height:80px">
<div class="c" style="left:0;width:48px"><i class="cb"></i></div><div class="c" style="left:48px;width:70px"><span class="t">17</span></div><div class="c" style="left:118px;width:80px"><span class="tl">中文繁体</span></div><div class="c" style="left:198px;width:330px"><div class="imgb" style="left:78px"><svg class="abs" style="left:23.9px;top:24.7px" width="11" height="11" viewBox="0 0 11 11"><rect x=".55" y=".55" width="9.9" height="9.9" rx=".4" fill="none" stroke="#6c6c6c" stroke-width="1.1"/><path d="M.9 9.9L4.6 5.5l2.5 2.2 3.2-3.6" fill="none" stroke="#6c6c6c" stroke-width="1.1"/><circle cx="3.9" cy="3.3" r=".95" fill="#6c6c6c"/></svg></div><span class="tt" style="left:148px">病嬌攝政王</span><span class="tag to" style="left:148.0px;width:40px">热门</span><span class="tag to" style="left:192.0px;width:40px">推荐</span><i class="pt" style="left:236.0px"></i></div><div class="c" style="left:528px;width:90px"><span class="t">200</span></div><div class="c" style="left:618px;width:100px"><span class="t">0</span></div><div class="c" style="left:718px;width:100px"><span class="t">26</span></div><div class="c" style="left:818px;width:100px"><span class="t">0</span></div><div class="c" style="left:918px;width:90px"><span class="t">0</span></div><div class="c kp" style="left:1008px;width:90px"><span class="t">0</span></div><div class="c k" style="left:1098px;width:100px"><span class="t">0</span></div><div class="c" style="left:1198px;width:100px"><span class="t">0</span></div><div class="c" style="left:1298px;width:80px"><span class="t">2979</span></div><div class="c" style="left:1378px;width:150px"><span class="t" style="left:-3px">2025-09-24 11:10:50</span></div></div>
<div class="row s" style="top:681px;height:80px">
<div class="c" style="left:0;width:48px"><i class="cb"></i></div><div class="c" style="left:48px;width:70px"><span class="t">16</span></div><div class="c" style="left:118px;width:80px"><span class="tl">英文</span></div><div class="c" style="left:198px;width:330px"><div class="imgb" style="left:68px"><svg class="abs" style="left:23.9px;top:24.7px" width="11" height="11" viewBox="0 0 11 11"><rect x=".55" y=".55" width="9.9" height="9.9" rx=".4" fill="none" stroke="#6c6c6c" stroke-width="1.1"/><path d="M.9 9.9L4.6 5.5l2.5 2.2 3.2-3.6" fill="none" stroke="#6c6c6c" stroke-width="1.1"/><circle cx="3.9" cy="3.3" r=".95" fill="#6c6c6c"/></svg></div><span class="tt" style="left:138px">Yandere Regent King</span><span class="tag to" style="left:141.1px;width:40px">热门</span><span class="tag to" style="left:191.2px;width:40px">推荐</span><i class="pt" style="left:241.3px"></i></div><div class="c" style="left:528px;width:90px"><span class="t">200</span></div><div class="c" style="left:618px;width:100px"><span class="t">0</span></div><div class="c" style="left:718px;width:100px"><span class="t">26</span></div><div class="c" style="left:818px;width:100px"><span class="t">0</span></div><div class="c" style="left:918px;width:90px"><span class="t">1</span></div><div class="c kp" style="left:1008px;width:90px"><span class="t">0</span></div><div class="c k" style="left:1098px;width:100px"><span class="t">0</span></div><div class="c" style="left:1198px;width:100px"><span class="t">0</span></div><div class="c" style="left:1298px;width:80px"><span class="t">2979</span></div><div class="c" style="left:1378px;width:150px"><span class="t" style="left:-3px">2025-09-24 11:10:50</span></div></div>
<div class="row" style="top:761px;height:80px">
<div class="c" style="left:0;width:48px"><i class="cb"></i></div><div class="c" style="left:48px;width:70px"><span class="t">15</span></div><div class="c" style="left:118px;width:80px"><span class="tl">中文简体</span></div><div class="c" style="left:198px;width:330px"><div class="imgb" style="left:78px"><svg class="abs" style="left:23.9px;top:24.7px" width="11" height="11" viewBox="0 0 11 11"><rect x=".55" y=".55" width="9.9" height="9.9" rx=".4" fill="none" stroke="#6c6c6c" stroke-width="1.1"/><path d="M.9 9.9L4.6 5.5l2.5 2.2 3.2-3.6" fill="none" stroke="#6c6c6c" stroke-width="1.1"/><circle cx="3.9" cy="3.3" r=".95" fill="#6c6c6c"/></svg></div><span class="tt" style="left:148px">病娇摄政王</span><span class="tag to" style="left:148.0px;width:40px">热门</span><span class="tag to" style="left:192.0px;width:40px">推荐</span><i class="pt" style="left:236.0px"></i></div><div class="c" style="left:528px;width:90px"><span class="t">200</span></div><div class="c" style="left:618px;width:100px"><span class="t">0</span></div><div class="c" style="left:718px;width:100px"><span class="t">26</span></div><div class="c" style="left:818px;width:100px"><span class="t">0</span></div><div class="c" style="left:918px;width:90px"><span class="t">1</span></div><div class="c kp" style="left:1008px;width:90px"><span class="t">0</span></div><div class="c k" style="left:1098px;width:100px"><span class="t">0</span></div><div class="c" style="left:1198px;width:100px"><span class="t">0</span></div><div class="c" style="left:1298px;width:80px"><span class="t">2979</span></div><div class="c" style="left:1378px;width:150px"><span class="t" style="left:-3px">2025-09-24 11:10:50</span></div></div>
<div class="abs" style="left:0;top:841px;width:1672px;height:14px;background:#fafafa"></div><div class="abs" style="left:18px;top:844px;width:1578px;height:9px;border-radius:5px;background:#8b8b8b"></div><svg class="abs" style="left:4px;top:843px" width="9" height="11" viewBox="0 0 9 11"><path d="M8 .8v9.4L1 5.5z" fill="#8f8f8f"/></svg><svg class="abs" style="left:1661px;top:843px" width="9" height="11" viewBox="0 0 9 11"><path d="M1 .8v9.4l7-4.7z" fill="#505050"/></svg><div id="fx">
<div class="frow" style="top:0;height:43px;background:#fafafa;border-bottom:0"><span class="abs" style="left:0;right:0;top:10px;line-height:23px;text-align:center;color:#333">操作</span></div>
<div class="frow" style="top:43px;height:80px"><a style="left:13px;color:#7a3fe0">上架</a><a style="left:51px">编辑</a><a style="left:91px">复制</a><a style="left:131px">分享</a><a style="left:171px">删除</a></div>
<div class="frow s" style="top:123px;height:80px"><a style="left:13px;color:#7a3fe0">上架</a><a style="left:51px">编辑</a><a style="left:91px">复制</a><a style="left:131px">分享</a><a style="left:171px">删除</a></div>
<div class="frow" style="top:203px;height:80px"><a style="left:13px;color:#f5484b">下架</a><a style="left:51px">编辑</a><a style="left:91px">复制</a><a style="left:131px">分享</a><a style="left:171px">删除</a></div>
<div class="frow s" style="top:283px;height:80px"><a style="left:13px;color:#7a3fe0">上架</a><a style="left:51px">编辑</a><a style="left:91px">复制</a><a style="left:131px">分享</a><a style="left:171px">删除</a></div>
<div class="frow" style="top:363px;height:80px"><a style="left:13px;color:#7a3fe0">上架</a><a style="left:51px">编辑</a><a style="left:91px">复制</a><a style="left:131px">分享</a><a style="left:171px">删除</a></div>
<div class="frow s" style="top:443px;height:158px"><a style="left:13px;color:#7a3fe0">上架</a><a style="left:51px">编辑</a><a style="left:91px">复制</a><a style="left:131px">分享</a><a style="left:171px">删除</a></div>
<div class="frow" style="top:601px;height:80px"><a style="left:13px;color:#7a3fe0">上架</a><a style="left:51px">编辑</a><a style="left:91px">复制</a><a style="left:131px">分享</a><a style="left:171px">删除</a></div>
<div class="frow s" style="top:681px;height:80px"><a style="left:13px;color:#7a3fe0">上架</a><a style="left:51px">编辑</a><a style="left:91px">复制</a><a style="left:131px">分享</a><a style="left:171px">删除</a></div>
<div class="frow" style="top:761px;height:80px"><a style="left:13px;color:#f5484b">下架</a><a style="left:51px">编辑</a><a style="left:91px">复制</a><a style="left:131px">分享</a><a style="left:171px">删除</a></div>
</div>
</div>
<svg id="stamp" class="abs" style="left:0;top:0;pointer-events:none" width="500" height="500" viewBox="0 0 500 500">
<circle cx="219.5" cy="242.4" r="139.4" fill="none" stroke="#f00" stroke-width="6.2"/>
<text fill="#f00" stroke="#f00" stroke-width=".35" font-family="'Liberation Sans',sans-serif" font-size="23.5" font-weight="700" x="119.22 113.33 113.13 120.17 130.77 147.34 170.33 187.68 214.64 242.48 262.93 281.25 302.44 315.4 323.54 326.57" y="279.69 255.62 230.85 203.58 182.89 163.67 147.76 140.25 135.71 138.26 144.83 154.88 175.35 195.4 218.09 239.41" rotate="-105.5 -92.2 -78.9 -66.9 -52.3 -39 -25.7 -12.4 0.9 14.2 27.5 40.8 52.8 67.4 80.7 94">www.haiwaiym.com</text>
<text fill="#f00" stroke="#f00" stroke-width=".3" font-family="'Liberation Sans',sans-serif" font-size="26.5" font-weight="700" transform="scale(0.86 1)" x="140.63 161 184.34 197.37 219.96 243.3 259.26 274.5 298.18 318.21 337.14 353.1" y="322.4">haiwaiym.com</text>
<text fill="#f00" font-family="'Liberation Sans',sans-serif" font-size="13.6" font-style="italic" x="137.34 149.69 165.05 175.92 191.59 208.82 222.07 234.93 253.49 266.47 279.94 291.44" y="345.14 353.91 362.11 366.57 370.96 373.47 373.92 373.11 369.45 365.27 359.25 352.62" rotate="37 30.4 23.8 17.2 10.6 4 -2.6 -9.2 -15.8 -22.4 -29 -35.6">haiwaiym.com</text>
<text fill="#f00" font-family="'Noto Serif CJK SC','Liberation Serif',serif" font-weight="600" font-size="37" transform="translate(0 256) skewX(-6)" x="139.5 181.5 223 263.5" y="0">海外源码</text>
</svg>
</body>
</html>
